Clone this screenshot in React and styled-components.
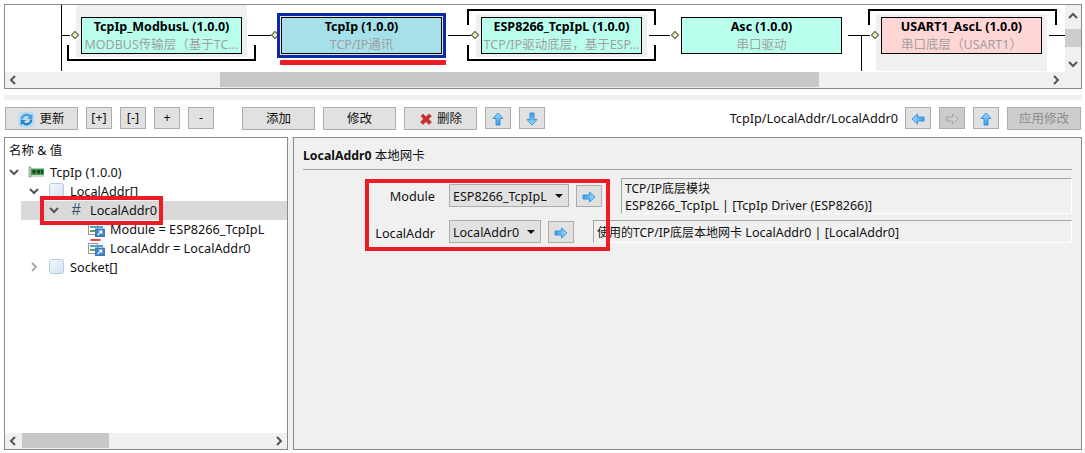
import React from "react";
import styled, { createGlobalStyle } from "styled-components";

const Global = createGlobalStyle`
  html, body { margin: 0; padding: 0; background: #fff; }
  * { box-sizing: border-box; }
  body { font-family: "Noto Sans", "Noto Sans CJK SC", sans-serif; font-size: 12px; color: #111; }
`;

const Page = styled.div`
  width: 1085px; height: 453px; overflow: hidden; position: relative; background: #fff;
  display: flex; flex-direction: column;
`;

/* ---------- diagram ---------- */
const DiagramFrame = styled.section`
  margin: 4px 3px 0 4px; height: 85px; border: 1px solid #8a8a8e;
  display: grid; grid-template-columns: 1fr 16px; grid-template-rows: 1fr 16px; background: #f0f0f0;
`;
const Canvas = styled.div`
  position: relative; background: #fff; overflow: hidden;
`;
const ModuleArea = styled.div`
  position: absolute; left: ${p => p.$x - 5}px; top: ${p => p.$y - 5}px; width: ${p => p.$w}px; height: ${p => p.$h}px; background: #f0f0f0;
`;
const Node = styled.div`
  position: absolute; left: ${p => p.$x - 5}px; top: 12px; width: ${p => p.$w}px; height: 37px;
  background: ${p => p.$bg}; border: 1px solid #000; text-align: center; overflow: hidden; white-space: nowrap;
`;
const NodeTitle = styled.div`
  font-weight: 700; font-size: 12.5px; line-height: 16px; margin-top: 1px; color: #000;
`;
const NodeSub = styled.div`
  font-size: 12.5px; line-height: 18px; color: #9f9f9f; margin-top: 1px;
`;
const SelectRing = styled.div`
  position: absolute; left: ${277 - 5}px; top: 8px; width: 169px; height: 45px; border: 3px solid #0a2aa8; background: #dfe3ee;
`;
const RedUnderline = styled.div`
  position: absolute; left: ${280 - 5}px; top: 55px; width: 166px; height: 5px; background: #ed1c24; border-radius: 1px;
`;
const Wire = styled.div`
  position: absolute; left: ${p => p.$x - 5}px; top: ${p => p.$y - 5}px; width: ${p => p.$w}px; height: ${p => p.$h}px; background: #000;
`;
const Bracket = styled.div`
  position: absolute; left: ${p => p.$x - 5}px; top: ${p => p.$y - 5}px; width: ${p => p.$w}px; height: 16px;
  border: 2px solid #000; ${p => (p.$top ? "border-bottom: 0;" : "border-top: 0;")}
`;
const Diamond = styled.div`
  position: absolute; left: ${p => p.$x - 5 - 3}px; top: 27px; width: 6px; height: 6px; background: #e6f5b4; border: 1px solid #555; transform: rotate(45deg);
`;

const VTrack = styled.div`
  background: #f0f0f0; display: flex; flex-direction: column; align-items: center; justify-content: space-between; padding: 6px 0 3px; position: relative;
`;
const VThumb = styled.div`
  position: absolute; left: 0; right: 0; top: 24px; height: 18px; background: #cdcdcd;
`;
const HTrack = styled.div`
  background: #f0f0f0; display: flex; align-items: center; justify-content: space-between; padding: 0 4px 0 3px; position: relative; height: 16px;
`;
const HThumb = styled.div`
  position: absolute; top: 0; bottom: 1px; left: ${p => p.$x}px; width: ${p => p.$w}px; background: #c8c8c8;
`;
const Corner = styled.div`background: #f0f0f0;`;

const Strip = styled.div`
  margin: 6px 3px 0 4px; height: 5px; background: #f0f0f0;
`;

/* ---------- toolbar ---------- */
const Toolbar = styled.div`
  display: flex; align-items: flex-start; gap: 8px; padding: 7px 4px 0 5px; height: 37px;
`;
const Btn = styled.button`
  font: inherit; font-size: 12.5px; padding: 1px 0 0; margin-left: ${p => p.$ml || 0}px;
  width: ${p => p.$w || 26}px; height: ${p => p.$h || 22}px; background: ${p => (p.$off ? "#cccccc" : "#e1e1e1")};
  border: 1px solid #adadad; display: inline-flex; align-items: center; justify-content: center; gap: 4px;
  color: ${p => (p.$off ? "#8f8f8f" : "#111")}; line-height: 1; flex: none;
`;
const PathText = styled.span`
  margin-left: auto; margin-right: -1px; font-size: 12.7px; line-height: 23px; color: #111;
`;

/* ---------- workspace ---------- */
const Workspace = styled.div`
  display: flex; margin-left: 4px; height: 313px; background: #f0f0f0; width: 1078px;
`;
const TreePane = styled.div`
  position: relative; width: 284px; border: 1px solid #8a8a8e; background: #fff; display: flex; flex-direction: column; flex: none;
`;
const TreeHead = styled.div`
  font-size: 12.5px; padding: 4px 0 0 4px; height: 25px; line-height: 18px;
`;
const TreeBody = styled.div`flex: 1;`;
const Row = styled.div`
  height: 19px; display: flex; align-items: center; position: relative; padding: 0 0 2px ${p => p.$indent}px; font-size: 12.7px; white-space: nowrap;
`;
const RowSel = styled.div`
  position: absolute; left: ${p => p.$x}px; right: 0; top: 0; bottom: 0; background: #d9d9d9;
`;
const RowInner = styled.div`
  position: relative; display: flex; align-items: center; height: 100%;
`;
const Twisty = styled.span`
  display: inline-flex; width: 10px; justify-content: center; margin-right: ${p => p.$mr}px; flex: none;
`;
const IconSlot = styled.span`
  display: inline-flex; width: ${p => p.$w}px; margin-right: ${p => p.$mr}px; justify-content: center; flex: none;
`;
const Hash = styled.span`
  font-family: "Liberation Sans", sans-serif; font-style: italic; font-size: 16px; line-height: 16px; color: #35536e;
`;
const TreeScroll = styled(HTrack)`padding: 0 3px 0 3px; height: 16px;`;
const RedBox = styled.div`
  position: absolute; left: ${p => p.$x}px; top: ${p => p.$y}px; width: ${p => p.$w}px; height: ${p => p.$h}px; border: 4px solid #ed1c24; pointer-events: none;
`;

const DetailPane = styled.div`
  position: relative; margin-left: 5px; flex: 1; border: 1px solid #8a8a8e; background: #f0f0f0; padding: 0 9px;
`;
const DetailTitle = styled.div`
  height: 32px; border-bottom: 1px solid #a6a6a6; line-height: 35px; font-size: 12.5px; white-space: nowrap;
  b { font-weight: 700; font-size: 12.3px; }
`;
const Field = styled.div`
  display: flex; align-items: flex-start; margin-top: ${p => p.$mt}px;
`;
const FieldLabel = styled.div`
  width: 132px; flex: none; text-align: right; font-size: 12.7px; padding-top: ${p => p.$pt}px; line-height: 18px;
`;
const Select = styled.div`
  margin-left: 14px; width: ${p => p.$w}px; height: 23px; margin-top: ${p => p.$top}px; flex: none; background: #e1e1e1; border: 1px solid #adadad;
  display: flex; align-items: center; padding: 1px 0 0 3px; font-size: 12.5px; position: relative;
`;
const Caret = styled.span`
  margin-left: auto; margin-right: 5px; width: 0; height: 0; border-left: 4px solid transparent; border-right: 4px solid transparent; border-top: 4px solid #111;
`;
const FieldBtn = styled(Btn)`margin: ${p => p.$top}px 0 0 7px;`;
const Desc = styled.div`
  margin-left: ${p => p.$ml}px; flex: 1; height: ${p => p.$h}px; border: 1px solid #fff; border-top-color: #a6a6a6; border-left-color: #a6a6a6;
  padding: ${p => p.$pt}px 0 0 3px; font-size: 12.5px; line-height: 17px; white-space: nowrap;
`;
const Cjk = styled.span`font-size: 12px;`;

/* ---------- icons ---------- */
const Chevron = ({ dir, color = "#555" }) => {
  const d = { down: "M1 3 L5 7 L9 3", right: "M3 1 L7 5 L3 9", left: "M7 1 L3 5 L7 9", up: "M1 7 L5 3 L9 7" }[dir];
  return (
    <svg width="10" height="10" viewBox="0 0 10 10"><path d={d} fill="none" stroke={color} strokeWidth="2" /></svg>
  );
};
const FatArrow = ({ dir = "up", off }) => {
  const rot = { up: 0, right: 90, down: 180, left: 270 }[dir];
  const id = `g-${dir}-${off ? 1 : 0}`;
  return (
    <svg width="16" height="16" viewBox="0 0 16 16">
      <defs>
        <linearGradient id={id} x1="0" y1="0" x2="0" y2="1">
          <stop offset="0" stopColor={off ? "#dcdcdc" : "#a5dcff"} />
          <stop offset="1" stopColor={off ? "#bdbdbd" : "#2f9be8"} />
        </linearGradient>
      </defs>
      <path transform={`rotate(${rot} 8 8)`} d="M8 2 L13 7.5 H10 V14 H6 V7.5 H3 Z" fill={`url(#${id})`} stroke={off ? "#a8a8a8" : "#3a95dc"} strokeWidth="1" strokeLinejoin="round" />
    </svg>
  );
};
const Refresh = () => (
  <svg width="17" height="17" viewBox="0 0 16 16">
    <rect x="0.5" y="0.5" width="15" height="15" rx="4" fill="#b9dcf3" />
    <path d="M2.5 8 a5.5 5.5 0 0 1 9.3-4 L13.5 2.5 V7.5 H8.5 L10.4 5.6 A3.5 3.5 0 0 0 4.5 8 Z" fill="#4a9fdd" />
    <path d="M13.5 8 a5.5 5.5 0 0 1-9.3 4 L2.5 13.5 V8.5 H7.5 L5.6 10.4 A3.5 3.5 0 0 0 11.5 8 Z" fill="#2b83c9" />
  </svg>
);
const RedX = () => (
  <svg width="14" height="14" viewBox="0 0 14 14">
    <path d="M2 4 L4 2 L7 5 L10 2 L12.5 4 L9.5 7 L12.5 10 L10 12.5 L7 9.5 L4 12.5 L1.5 10 L4.5 7 Z" fill="#cf2a27" stroke="#a93a3a" strokeWidth="0.6" />
  </svg>
);
const Chip = () => (
  <svg width="16" height="12" viewBox="0 0 16 12">
    <path d="M1 1 H3 V11 H1 Z" fill="#c9d4c9" stroke="#7d8c7d" strokeWidth="0.7" />
    <rect x="3" y="2.5" width="13" height="6.5" fill="#3f9f4c" />
    <rect x="4.5" y="4" width="3" height="3.5" fill="#1c3f22" />
    <rect x="9" y="4" width="3" height="3.5" fill="#1c3f22" />
    <rect x="13" y="4" width="2" height="3.5" fill="#1c3f22" />
    <path d="M3 10 H16" stroke="#9aa89a" />
  </svg>
);
const Square = () => (
  <svg width="15" height="15" viewBox="0 0 15 15">
    <defs>
      <linearGradient id="sq" x1="0" y1="0" x2="1" y2="1">
        <stop offset="0" stopColor="#f4f8fc" />
        <stop offset="1" stopColor="#d3e2f1" />
      </linearGradient>
    </defs>
    <rect x="0.5" y="0.5" width="14" height="14" rx="2" fill="url(#sq)" stroke="#b4cbe2" />
  </svg>
);
const LinkItem = ({ red }) => (
  <svg width="17" height="17" viewBox="0 0 17 17">
    {red && <rect x="2.5" y="0" width="10" height="2" fill="#e0474c" />}
    <rect x="0.5" y="4.5" width="9" height="10" fill="#fff" stroke="#333" strokeDasharray="1 1" />
    <rect x="2" y="6" width="13" height="2" fill="#4fa3c9" />
    <rect x="2" y="10" width="5" height="2" fill="#5aa25f" />
    <rect x="7.5" y="9" width="9" height="8" fill="#3f84cc" stroke="#2a5f9e" strokeWidth="0.7" />
    <path d="M9.7 15 L13.5 11 M10.8 11 H13.8 V14" stroke="#fff" strokeWidth="1.1" fill="none" />
  </svg>
);

export default function App() {
  return (
    <Page>
      <Global />
      <DiagramFrame>
        <Canvas>
          <ModuleArea $x={76} $y={5} $w={171} $h={52} />
          <ModuleArea $x={476} $y={14} $w={171} $h={43} />
          <ModuleArea $x={876} $y={14} $w={171} $h={57} />

          <Wire $x={61} $y={5} $w={1} $h={66} />
          <Wire $x={62} $y={35} $w={8} $h={1} />
          <Diamond $x={74.5} />
          <Bracket $x={67} $y={45} $w={189} />
          <Node $x={81} $w={161} $bg="#baffee">
            <NodeTitle>TcpIp_ModbusL (1.0.0)</NodeTitle>
            <NodeSub>MODBUS传输层（基于TC...</NodeSub>
          </Node>

          <Wire $x={248} $y={35} $w={23} $h={1} />
          <Diamond $x={274.5} />
          <SelectRing />
          <Node $x={281} $w={161} $bg="#a6e1ea">
            <NodeTitle>TcpIp (1.0.0)</NodeTitle>
            <NodeSub>TCP/IP通讯</NodeSub>
          </Node>
          <RedUnderline />

          <Wire $x={448} $y={35} $w={24} $h={1} />
          <Diamond $x={474.5} />
          <Bracket $x={467} $y={9} $w={189} $top />
          <Bracket $x={467} $y={45} $w={189} />
          <Node $x={481} $w={161} $bg="#baffee">
            <NodeTitle>ESP8266_TcpIpL (1.0.0)</NodeTitle>
            <NodeSub>TCP/IP驱动底层，基于ESP...</NodeSub>
          </Node>

          <Wire $x={649} $y={35} $w={21} $h={1} />
          <Diamond $x={674.5} />
          <Node $x={681} $w={161} $bg="#baffee">
            <NodeTitle>Asc (1.0.0)</NodeTitle>
            <NodeSub>串口驱动</NodeSub>
          </Node>

          <Wire $x={848} $y={35} $w={22} $h={1} />
          <Wire $x={861} $y={35} $w={1} $h={36} />
          <Diamond $x={874.5} />
          <Bracket $x={868} $y={9} $w={189} $top />
          <Node $x={881} $w={161} $bg="#ffd6d6">
            <NodeTitle>USART1_AscL (1.0.0)</NodeTitle>
            <NodeSub>串口底层（USART1）</NodeSub>
          </Node>
          <Wire $x={1049} $y={35} $w={16} $h={1} />
        </Canvas>
        <VTrack>
          <VThumb />
          <Chevron dir="up" />
          <Chevron dir="down" />
        </VTrack>
        <HTrack>
          <Chevron dir="left" />
          <HThumb $x={215} $w={599} />
          <Chevron dir="right" />
        </HTrack>
        <Corner />
      </DiagramFrame>

      <Strip />

      <Toolbar>
        <Btn $w={73} $h={23}><Refresh />更新</Btn>
        <Btn>[+]</Btn>
        <Btn>[-]</Btn>
        <Btn>+</Btn>
        <Btn>-</Btn>
        <Btn $w={73} $h={23} $ml={20}>添加</Btn>
        <Btn $w={73} $h={23}>修改</Btn>
        <Btn $w={73} $h={23}><RedX />删除</Btn>
        <Btn><FatArrow dir="up" /></Btn>
        <Btn><FatArrow dir="down" /></Btn>
        <PathText>TcpIp/LocalAddr/LocalAddr0</PathText>
        <Btn><FatArrow dir="left" /></Btn>
        <Btn $off><FatArrow dir="right" off /></Btn>
        <Btn><FatArrow dir="up" /></Btn>
        <Btn $w={74} $h={23} $off>应用修改</Btn>
      </Toolbar>

      <Workspace>
        <TreePane>
          <TreeHead>名称 &amp; 值</TreeHead>
          <TreeBody>
            <Row $indent={4}>
              <RowInner>
                <Twisty $mr={9}><Chevron dir="down" /></Twisty>
                <IconSlot $w={16} $mr={6}><Chip /></IconSlot>
                TcpIp (1.0.0)
              </RowInner>
            </Row>
            <Row $indent={24}>
              <RowInner>
                <Twisty $mr={10}><Chevron dir="down" /></Twisty>
                <IconSlot $w={15} $mr={6}><Square /></IconSlot>
                LocalAddr[]
              </RowInner>
            </Row>
            <Row $indent={44}>
              <RowSel $x={16} />
              <RowInner>
                <Twisty $mr={10}><Chevron dir="down" /></Twisty>
                <IconSlot $w={14} $mr={7}><Hash>#</Hash></IconSlot>
                LocalAddr0
              </RowInner>
            </Row>
            <Row $indent={83}>
              <RowInner>
                <IconSlot $w={17} $mr={5}><LinkItem /></IconSlot>
                Module = ESP8266_TcpIpL
              </RowInner>
            </Row>
            <Row $indent={83}>
              <RowInner>
                <IconSlot $w={17} $mr={5}><LinkItem red /></IconSlot>
                LocalAddr = LocalAddr0
              </RowInner>
            </Row>
            <Row $indent={24}>
              <RowInner>
                <Twisty $mr={10}><Chevron dir="right" color="#aaa" /></Twisty>
                <IconSlot $w={15} $mr={6}><Square /></IconSlot>
                Socket[]
              </RowInner>
            </Row>
          </TreeBody>
          <TreeScroll>
            <Chevron dir="left" />
            <HThumb $x={17} $w={87} />
            <Chevron dir="right" />
          </TreeScroll>
          <RedBox $x={35} $y={58} $w={123} $h={29} />
        </TreePane>

        <DetailPane>
          <DetailTitle><b>LocalAddr0</b> 本地网卡</DetailTitle>
          <Field $mt={8}>
            <FieldLabel $pt={9}>Module</FieldLabel>
            <Select $w={120} $top={6}>ESP8266_TcpIpL<Caret /></Select>
            <FieldBtn $top={7}><FatArrow dir="right" /></FieldBtn>
            <Desc $ml={19} $h={36} $pt={1}><Cjk>TCP/IP底层模块</Cjk><br />ESP8266_TcpIpL | [TcpIp Driver (ESP8266)]</Desc>
          </Field>
          <Field $mt={6}>
            <FieldLabel $pt={4}>LocalAddr</FieldLabel>
            <Select $w={92} $top={0}>LocalAddr0<Caret /></Select>
            <FieldBtn $top={1}><FatArrow dir="right" /></FieldBtn>
            <Desc $ml={19} $h={23} $pt={3}><Cjk>使用的TCP/IP底层本地网卡</Cjk> LocalAddr0 | [LocalAddr0]</Desc>
          </Field>
          <RedBox $x={71} $y={41} $w={245} $h={72} />
        </DetailPane>
      </Workspace>
    </Page>
  );
}
